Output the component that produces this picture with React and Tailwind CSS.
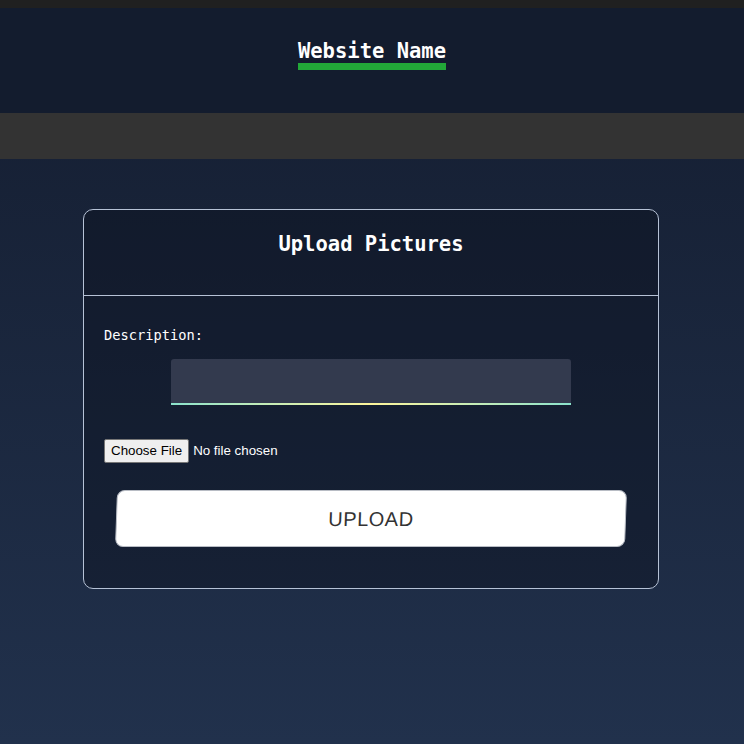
export default function App() {
  return (
    <div className="min-h-screen bg-gradient-to-b from-[#141d30] to-[#21314c] font-['DejaVu_Sans_Mono',monospace]">
      {/* top strip */}
      <div className="h-2 bg-[#202020]" />

      {/* header */}
      <header className="h-[105px] bg-[#131c2e] flex justify-center pt-[31px]">
        <h1 className="h-fit text-white font-bold text-[20.5px] leading-[24px] border-b-[7px] border-[#22a838]">
          Website Name
        </h1>
      </header>

      {/* nav bar */}
      <nav className="h-[46px] bg-[#333333]" />

      {/* main */}
      <main className="flex justify-center pt-[50px] pb-[155px]">
        <div className="w-[576px] -translate-x-px rounded-[10px] border border-[#b6c2d6] bg-[#0a101c]/40">
          <div className="h-[86px] flex justify-center pt-[21px] border-b border-[#b6c2d6]">
            <h2 className="text-white font-bold text-[20.5px] leading-[26px]">Upload Pictures</h2>
          </div>

          <form className="px-5 pt-[30px] pb-[41px]">
            <label className="block text-white text-[13.7px] leading-[18px]">Description:</label>

            <div className="flex justify-center mt-[15px]">
              <div className="w-[400px] rounded-t-[3px] overflow-hidden bg-[#333a4e]">
                <input type="text" className="block w-full h-[44px] bg-transparent outline-none px-3 text-white" />
                <div className="h-[2px] bg-gradient-to-r from-[#8be3cc] via-[#fdf59b] to-[#8be3cc]" />
              </div>
            </div>

            <input
              type="file"
              className="block mt-[34px] text-white text-[13.33px] font-['Liberation_Sans',Arial,sans-serif] file:bg-[#efefef] file:text-black file:border file:border-[#767676] file:rounded-[2px] file:px-[6px] file:py-[1px] file:mr-[4px]"
            />

            <div className="flex justify-center mt-[27px]">
              <button
                type="button"
                className="w-[510px] h-[57px] -skew-x-2 bg-white rounded-[8px] border border-[#b8bcc4] text-[#333] text-[20px] tracking-wide font-['Liberation_Sans',Arial,sans-serif]"
              >
                UPLOAD
              </button>
            </div>
          </form>
        </div>
      </main>
    </div>
  );
}
